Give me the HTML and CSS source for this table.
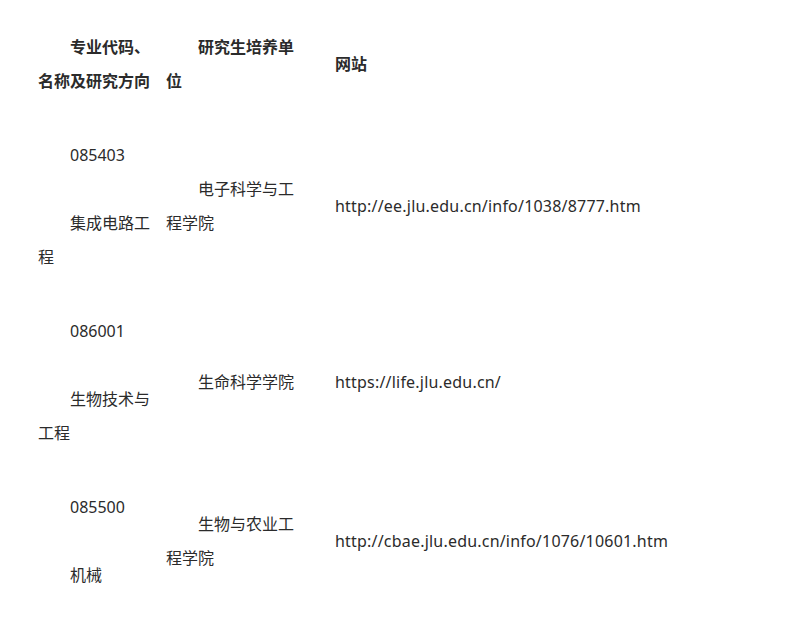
FILE: index.html
```html
<!DOCTYPE html>
<html lang="zh-CN">
<head>
<meta charset="utf-8">
<title>专业列表</title>
<link rel="stylesheet" href="styles.css">
</head>
<body>
<div class="page">
<table class="majors">
  <tr class="head">
    <td class="c1"><p class="ind">专业代码、名称及研究方向</p></td>
    <td class="c2"><p class="ind">研究生培养单位</p></td>
    <td class="c3"><p>网站</p></td>
  </tr>
  <tr>
    <td class="c1"><p class="ind">085403</p><p class="ind">&nbsp;</p><p class="ind">集成电路工程</p></td>
    <td class="c2"><p class="ind">电子科学与工程学院</p></td>
    <td class="c3"><p class="url">http://ee.jlu.edu.cn/info/1038/8777.htm</p></td>
  </tr>
  <tr>
    <td class="c1"><p class="ind">086001</p><p class="ind">&nbsp;</p><p class="ind">生物技术与工程</p></td>
    <td class="c2"><p class="ind">生命科学学院</p></td>
    <td class="c3"><p class="url">https://life.jlu.edu.cn/</p></td>
  </tr>
  <tr>
    <td class="c1"><p class="ind">085500</p><p class="ind">&nbsp;</p><p class="ind">机械</p></td>
    <td class="c2"><p class="ind">生物与农业工程学院</p></td>
    <td class="c3"><p class="url">http://cbae.jlu.edu.cn/info/1076/10601.htm</p></td>
  </tr>
</table>
</div>
</body>
</html>
```
FILE: styles.css
```css
html, body {
  margin: 0;
  padding: 0;
  background: #fff;
}
.page {
  padding: 10px 0 0 38px;
  font-family: "Noto Sans", "Noto Sans CJK SC", sans-serif;
  font-size: 16px;
  line-height: 34px;
  color: #2b2b2b;
}
.majors {
  border-collapse: collapse;
  border-spacing: 0;
}
.majors td {
  padding: 20px 0;
  vertical-align: middle;
}
.majors p {
  margin: 0;
}
.majors .ind {
  text-indent: 2em;
}
.majors .url {
  letter-spacing: 0.2px;
  line-height: 32px;
}
.head td {
  font-weight: bold;
}
.c1 {
  width: 120px;
  padding-right: 8px !important;
}
.c2 {
  width: 136px;
  padding-right: 33px !important;
}
.c3 {
  width: 440px;
}
```
